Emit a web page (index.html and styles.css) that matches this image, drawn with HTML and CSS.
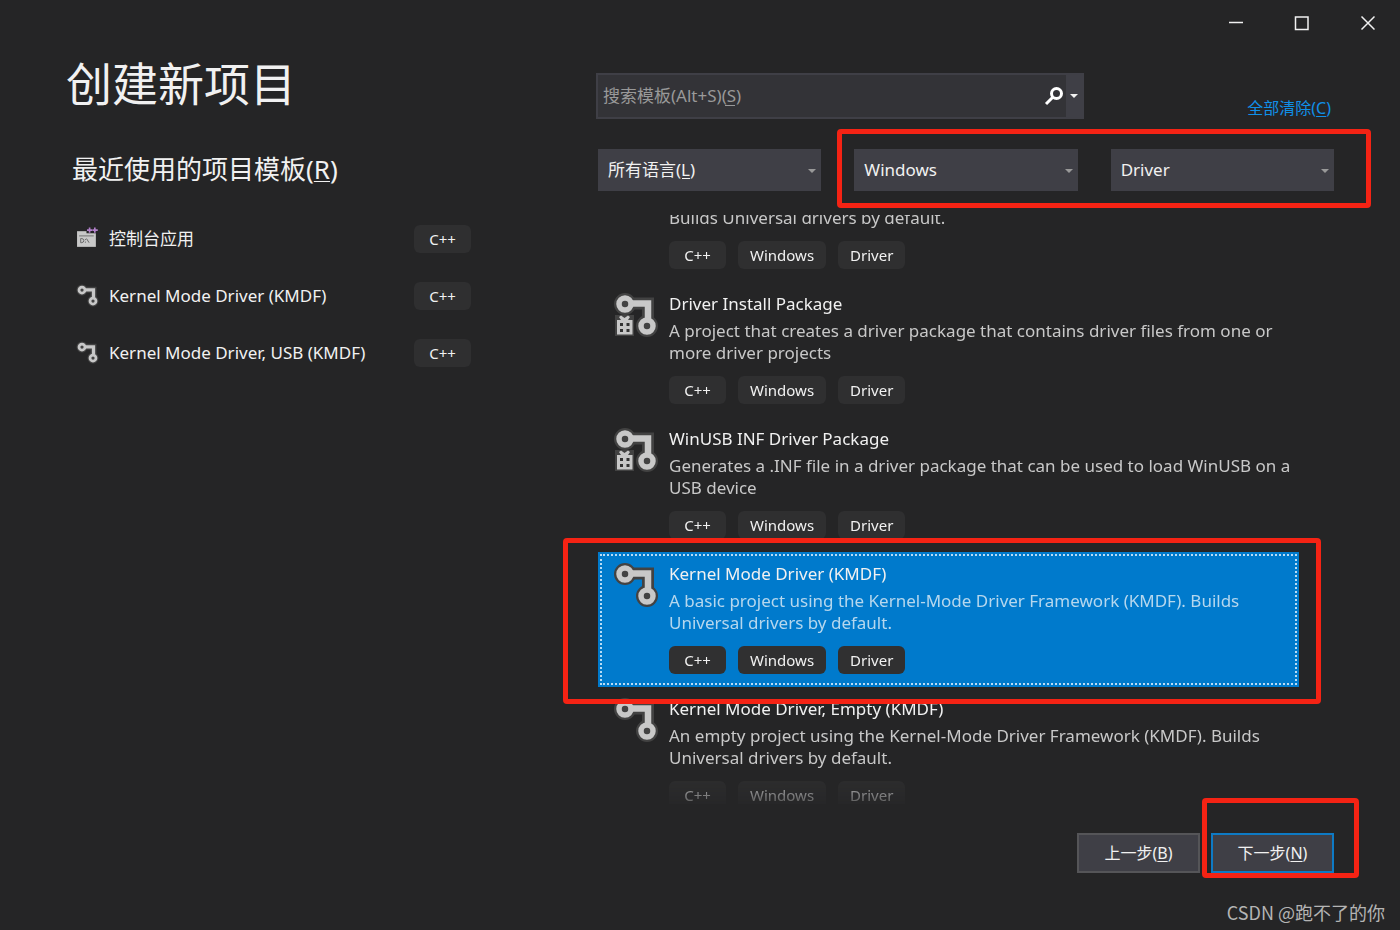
FILE: index.html
```html
<!DOCTYPE html>
<html lang="zh-CN">
<head>
<meta charset="utf-8">
<title>创建新项目</title>
<link rel="stylesheet" href="styles.css">
</head>
<body>
<svg class="defs" aria-hidden="true">
  <symbol id="driver" viewBox="0 0 44 46">
    <g fill="none" stroke="#424242">
      <path d="M11 11.5H34V34" stroke-width="12"/>
      <circle cx="11" cy="12" r="5.5" stroke-width="11" fill="#424242"/>
      <circle cx="33" cy="34" r="5.5" stroke-width="11" fill="#424242"/>
    </g>
    <g fill="none" stroke="#c8c8c8">
      <path d="M18 11.5H34V27" stroke-width="6.5"/>
      <circle cx="11" cy="12" r="6" stroke-width="5.5"/>
      <circle cx="33" cy="34" r="6" stroke-width="5.5"/>
    </g>
  </symbol>
  <symbol id="package" viewBox="0 0 44 46">
    <use href="#driver"/>
    <path d="M1 23H20V44H1Z" fill="#424242"/>
    <path d="M3 28H7L5 25L7 23.500L10.500 26L14 23.500L16 25L14 28H18.500V42.500H3Z" fill="#c8c8c8"/>
    <path d="M6 31h3v3h-3zM12.500 31h3v3h-3zM6 37h3v3h-3zM12.500 37h3v3h-3z" fill="#333"/>
  </symbol>
  <symbol id="console" viewBox="0 0 22 22">
    <path d="M1 4H19V19H1Z" fill="#c8c8c8"/>
    <path d="M3 8.500H17" stroke="#777" fill="none"/>
    <path d="M4.500 11v4h1q2-.3 2-2t-2-2zM9 11.500v1M9 14v1M10 11l2.500 4" stroke="#555" fill="none" stroke-width=".8"/>
    <path d="M10 0H21V6H10Z" fill="#252526"/>
    <path d="M13 .5v5M10.500 3h5M18 .5v5M15.800 3h5" stroke="#b180c9" stroke-width="1.600" fill="none"/>
  </symbol>
</svg>

<div class="window">
  <header class="titlebar">
    <button type="button" aria-label="最小化"><svg viewBox="0 0 16 16"><path d="M2 7.500H16"/></svg></button>
    <button type="button" aria-label="最大化"><svg viewBox="0 0 16 16"><path d="M2.500 2H15V14.500H2.500Z"/></svg></button>
    <button type="button" aria-label="关闭"><svg viewBox="0 0 16 16"><path d="M2.500 1.500L15.500 14.500M15.500 1.500L2.500 14.500"/></svg></button>
  </header>

  <main class="content">
    <section class="recent">
      <h1>创建新项目</h1>
      <h2>最近使用的项目模板(<u>R</u>)</h2>
      <ul class="recent-list">
        <li><svg><use href="#console"/></svg><span class="recent-name">控制台应用</span><span class="tag">C++</span></li>
        <li><svg><use href="#driver"/></svg><span class="recent-name">Kernel Mode Driver (KMDF)</span><span class="tag">C++</span></li>
        <li><svg><use href="#driver"/></svg><span class="recent-name">Kernel Mode Driver, USB (KMDF)</span><span class="tag">C++</span></li>
      </ul>
    </section>

    <section class="browse">
      <div class="search-row">
        <div class="search">
          <input type="text" aria-label="搜索模板" placeholder="搜索模板(Alt+S)(S)">
          <button type="button" class="search-go" aria-label="搜索"><svg viewBox="0 0 20 20"><circle cx="12.500" cy="7.500" r="5"/><path d="M9 11L2 18"/></svg></button>
          <button type="button" class="search-more" aria-label="搜索选项"><i class="arrow"></i></button>
        </div>
        <a class="clear" href="#">全部清除(<u>C</u>)</a>
      </div>

      <div class="filters">
        <div class="filter access-key"><select aria-label="语言"><option>所有语言(L)</option></select><i class="arrow"></i></div>
        <div class="filter"><select aria-label="平台"><option>Windows</option></select><i class="arrow"></i></div>
        <div class="filter"><select aria-label="项目类型"><option>Driver</option></select><i class="arrow"></i></div>
        <div class="mark mark-filters"></div>
      </div>

      <div class="results">
        <ul class="templates">
          <li class="template partial">
            <div class="info">
              <p>Builds Universal drivers by default.</p>
              <div class="tags"><span class="tag">C++</span><span class="tag">Windows</span><span class="tag">Driver</span></div>
            </div>
          </li>
          <li class="template">
            <svg><use href="#package"/></svg>
            <div class="info">
              <h3>Driver Install Package</h3>
              <p>A project that creates a driver package that contains driver files from one or more driver projects</p>
              <div class="tags"><span class="tag">C++</span><span class="tag">Windows</span><span class="tag">Driver</span></div>
            </div>
          </li>
          <li class="template">
            <svg><use href="#package"/></svg>
            <div class="info">
              <h3>WinUSB INF Driver Package</h3>
              <p>Generates a .INF file in a driver package that can be used to load WinUSB on a USB device</p>
              <div class="tags"><span class="tag">C++</span><span class="tag">Windows</span><span class="tag">Driver</span></div>
            </div>
          </li>
          <li class="template selected">
            <svg><use href="#driver"/></svg>
            <div class="info">
              <h3>Kernel Mode Driver (KMDF)</h3>
              <p>A basic project using the Kernel-Mode Driver Framework (KMDF). Builds Universal drivers by default.</p>
              <div class="tags"><span class="tag">C++</span><span class="tag">Windows</span><span class="tag">Driver</span></div>
            </div>
          </li>
          <li class="template">
            <svg><use href="#driver"/></svg>
            <div class="info">
              <h3>Kernel Mode Driver, Empty (KMDF)</h3>
              <p>An empty project using the Kernel-Mode Driver Framework (KMDF). Builds Universal drivers by default.</p>
              <div class="tags"><span class="tag">C++</span><span class="tag">Windows</span><span class="tag">Driver</span></div>
            </div>
          </li>
        </ul>
        <div class="mark mark-template"></div>
      </div>

      <footer class="actions">
        <button type="button">上一步(<u>B</u>)</button>
        <div class="next">
          <button type="button" class="primary">下一步(<u>N</u>)</button>
          <div class="mark mark-next"></div>
        </div>
      </footer>
    </section>
  </main>
  <p class="watermark">CSDN @跑不了的你</p>
</div>
</body>
</html>
```

FILE: styles.css
```css
* { box-sizing: border-box; }

body {
  margin: 0;
  background: #252526;
  color: #f1f1f1;
  font: 17px/22px "Noto Sans", "Noto Sans CJK SC", sans-serif;
}

h1, h2, h3, p, ul { margin: 0; padding: 0; font-weight: 400; }
ul { list-style: none; }
button, input, select { font: inherit; color: inherit; margin: 0; border: 0; border-radius: 0; }
u { text-decoration-thickness: 1px; text-underline-offset: 2px; }
.defs { position: absolute; width: 0; height: 0; }

.window { display: flex; flex-direction: column; height: 100vh; }

.titlebar { display: flex; justify-content: flex-end; height: 46px; }
.titlebar button {
  display: grid;
  place-items: center;
  width: 66px;
  background: none;
}
.titlebar svg { width: 16px; height: 16px; fill: none; stroke: #f1f1f1; stroke-width: 1.5; }

.content {
  flex: 1;
  min-height: 0;
  display: grid;
  grid-template-columns: 530px 1fr;
  padding: 0 66px;
}

h1 { margin-top: 8px; font-size: 46px; line-height: 58px; }
h2 { margin: 39px 0 0 6px; font-size: 26px; line-height: 36px; }

.recent-list { width: 395px; margin: 23px 0 0 10px; }
.recent-list li { display: flex; align-items: center; height: 57px; }
.recent-list svg { width: 23px; height: 23px; margin-right: 10px; }
.recent-name { flex: 1; }

.tag {
  min-width: 57px;
  padding: 0 12px;
  border-radius: 6px;
  background: #2f2f30;
  color: #f1f1f1;
  font-size: 15px;
  line-height: 28px;
  text-align: center;
}

.browse { display: flex; flex-direction: column; min-width: 0; min-height: 0; padding-top: 27px; }

.search-row { display: flex; justify-content: space-between; align-items: flex-end; }
.search {
  position: relative;
  display: flex;
  width: 488px;
  height: 46px;
  border: 2px solid #3f3f46;
  background: #333337;
}
.search::after {
  content: "";
  position: absolute;
  left: 127px;
  top: 30px;
  width: 10px;
  height: 1px;
  background: #999;
}
.search input { flex: 1; min-width: 0; padding: 0 5px; background: none; outline: 0; }
.search input::placeholder { color: #999; opacity: 1; }
.search button { display: grid; place-items: center; padding: 0; background: none; }
.search .search-go { width: 24px; }
.search-go svg { width: 20px; height: 20px; fill: none; stroke: #fff; stroke-width: 3; }
.search .search-more { width: 16px; background: #3f3f46; }
.arrow { border: 4px solid transparent; border-top-color: #f1f1f1; border-bottom: 0; }
.clear { padding-right: 3px; color: #1090e8; font-size: 16px; text-decoration: none; }

.filters {
  position: relative;
  display: grid;
  grid-template-columns: repeat(3, 1fr);
  gap: 33px;
  margin: 30px 0 0 2px;
}
.filter { position: relative; height: 42px; }
.filter select {
  width: 100%;
  height: 100%;
  padding: 0 10px;
  appearance: none;
  background: #3f3f46;
}
.filter .arrow { position: absolute; right: 5px; top: 20px; border-top-color: #999; }
.access-key::after {
  content: "";
  position: absolute;
  left: 84px;
  top: 29px;
  width: 8px;
  height: 1px;
  background: #f1f1f1;
}

.results { position: relative; flex: 1; min-height: 0; margin: 24px 0 0 2px; }
.templates {
  height: 100%;
  overflow: hidden;
  padding-right: 35px;
  mask-image: linear-gradient(#000 calc(100% - 36px), transparent calc(100% + 12px));
}
.template { display: flex; height: 135px; padding: 10px 4px 10px 16px; }
.template > svg { flex: none; width: 44px; height: 46px; margin-right: 11px; }
.template .info { flex: 1; min-width: 0; }
.template h3 { font-size: 17px; line-height: 24px; margin-bottom: 4px; }
.template p { color: #c8c8c8; }
.tags { display: flex; gap: 12px; margin-top: 12px; }
.partial { height: auto; margin-top: -8px; padding: 0 4px 13px 71px; }
.selected { background: #007acc; outline: 2px dotted #b9dcf5; outline-offset: -4px; }
.selected p { color: #b5d7ee; }
.selected .tag { background: #303031; }

.actions { display: flex; justify-content: flex-end; gap: 11px; margin: 29px 0 27px; }
.actions button { width: 123px; height: 40px; border: 2px solid #555558; background: #3f3f46; font-size: 16px; }
.actions .primary { border-color: #0e7ac4; }
.next { position: relative; }

.mark { position: absolute; border: 5px solid #f52314; border-radius: 4px; pointer-events: none; }
.mark-filters { left: 239px; right: -37px; top: -20px; bottom: -17px; }
.mark-template { left: -35px; right: 13px; top: 323px; height: 166px; }
.mark-next { left: -9px; right: -25px; top: -35px; bottom: -5px; }

.watermark { padding: 0 15px 6px; text-align: right; color: #b4b4b4; font-size: 18px; line-height: 24px; font-family: "Noto Sans CJK SC", sans-serif; }
```
